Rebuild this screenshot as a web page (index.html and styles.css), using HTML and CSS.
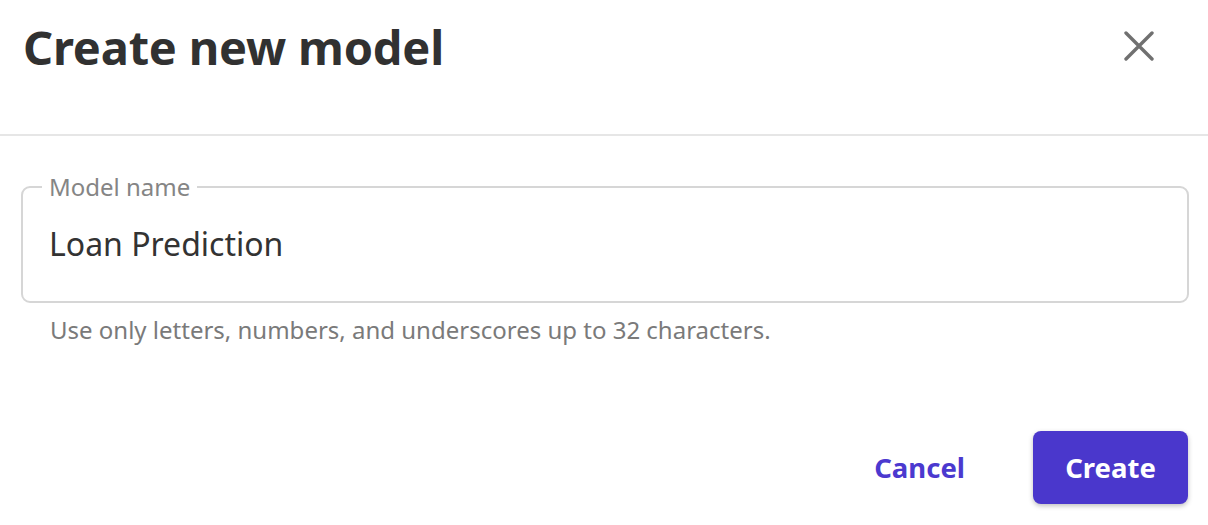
FILE: index.html
```html
<!DOCTYPE html>
<html lang="en">
<head>
<meta charset="utf-8">
<title>Create new model</title>
<link rel="stylesheet" href="styles.css">
</head>
<body>
<div class="dialog">
  <header class="dialog-header">
    <h1 class="dialog-title">Create new model</h1>
    <button class="close-btn" aria-label="Close">
      <svg width="30" height="30" viewBox="0 0 30 30" aria-hidden="true">
        <path d="M2 2 L28 28 M28 2 L2 28" stroke="#707070" stroke-width="3.4" stroke-linecap="round" fill="none"/>
      </svg>
    </button>
  </header>
  <main class="dialog-body">
    <fieldset class="field">
      <legend class="field-label">Model name</legend>
      <div class="field-value">Loan Prediction</div>
    </fieldset>
    <p class="field-help">Use only letters, numbers, and underscores up to 32 characters.</p>
  </main>
  <footer class="dialog-footer">
    <button class="btn btn-text">Cancel</button>
    <button class="btn btn-primary">Create</button>
  </footer>
</div>
</body>
</html>
```
FILE: styles.css
```css
html, body {
  margin: 0;
  padding: 0;
  background: #ffffff;
}
body {
  font-family: "Noto Sans", "Open Sans", sans-serif;
  color: #333333;
}
.dialog {
  width: 1208px;
  height: 525px;
}
.dialog-header {
  display: flex;
  align-items: center;
  justify-content: space-between;
  height: 136px;
  padding: 0 54px 0 23px;
  border-bottom: 2px solid #e6e6e6;
  box-sizing: border-box;
}
.dialog-title {
  margin: 0 0 40px 0;
  font-size: 47px;
  font-weight: 700;
  color: #313131;
  letter-spacing: -0.2px;
}
.close-btn {
  background: none;
  border: none;
  padding: 0;
  margin: 0 0 42px 0;
  width: 30px;
  height: 30px;
  cursor: pointer;
}
.dialog-body {
  padding: 0 19px 0 21px;
}
.field {
  margin: 37px 0 0 0;
  padding: 0 26px 0 26px;
  border: 2px solid #d6d6d6;
  border-radius: 9px;
  height: 130px;
  box-sizing: border-box;
}
.field-label {
  padding: 0 7px;
  margin-left: -7px;
  font-size: 24px;
  color: #858585;
  line-height: 28px;
}
.field-value {
  margin-top: 23px;
  font-size: 32px;
  color: #333333;
  line-height: 40px;
}
.field-help {
  margin: 12px 0 0 29px;
  font-size: 24px;
  color: #7a7a7a;
  line-height: 30px;
}
.dialog-footer {
  display: flex;
  justify-content: flex-end;
  align-items: center;
  gap: 68px;
  padding: 0 20px 0 0;
  margin-top: 86px;
}
.btn {
  font-family: "Noto Sans", "Open Sans", sans-serif;
  font-size: 27.5px;
  font-weight: 700;
  border: none;
  cursor: pointer;
}
.btn-text {
  background: none;
  color: #4b39cf;
  padding: 0;
}
.btn-primary {
  background: #4a37cc;
  color: #ffffff;
  width: 155px;
  height: 73px;
  border-radius: 8px;
  box-shadow: 0 2px 5px rgba(0, 0, 0, 0.25);
}
```
